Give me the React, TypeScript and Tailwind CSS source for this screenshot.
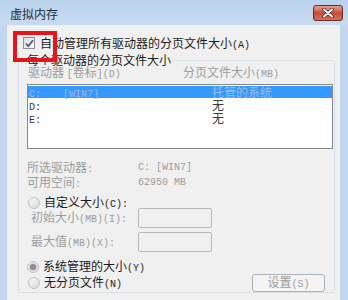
import type { ReactNode } from 'react';

function M({ children }: { children: ReactNode }) {
  return <span className="font-['Liberation_Mono',monospace] text-[10px] leading-none">{children}</span>;
}

function CloseButton() {
  return (
    <button className="mt-[5px] w-[30px] h-[16px] rounded-[3px] border border-[#6e2a22] bg-gradient-to-b from-[#e6a195] via-[#c9493a] to-[#d4705c] flex items-center justify-center">
      <svg width="12" height="10" viewBox="0 0 12 10">
        <path d="M2 1.5l8 7M10 1.5l-8 7" stroke="#5a2a24" strokeWidth="3.6" strokeLinecap="round" />
        <path d="M2 1.5l8 7M10 1.5l-8 7" stroke="#ffffff" strokeWidth="2" strokeLinecap="round" />
      </svg>
    </button>
  );
}

function Checkbox() {
  return (
    <span className="w-[12px] h-[12px] shrink-0 border border-[#8e8f8f] bg-gradient-to-br from-[#dcdcdc] to-[#fbfbfb] flex items-center justify-center">
      <svg width="9" height="9" viewBox="0 0 9 9">
        <path d="M1 4.5l2.3 2.6L8 1.2" fill="none" stroke="#4a5d80" strokeWidth="1.8" />
      </svg>
    </span>
  );
}

function Radio({ checked }: { checked?: boolean }) {
  return (
    <span className="w-[12px] h-[12px] shrink-0 rounded-full border border-[#c2c2c2] bg-gradient-to-br from-[#f8f8f8] to-[#dadada] flex items-center justify-center">
      {checked && <span className="w-[6px] h-[6px] rounded-full bg-[#8d8d8d] ring-1 ring-[#cfcfcf]" />}
    </span>
  );
}

function TextBox() {
  return <div className="w-[74px] h-[20px] border border-[#b8b8b8] rounded-[2px] bg-[#f0f0f0]" />;
}

export default function App() {
  return (
    <div className="relative w-[348px] h-[300px] overflow-hidden flex flex-col bg-[#c3d8ee] font-['Noto_Sans_CJK_SC',sans-serif] text-[12px] text-[#1c1c1c]">
      <div className="h-[25px] shrink-0 flex items-start justify-between pl-[10px] pr-[5px] bg-gradient-to-b from-[#bad2ec] to-[#c8dbf0]">
        <span className="mt-[6px] leading-[16px] text-[#1e2b3c]">虚拟内存</span>
        <CloseButton />
      </div>

      <div className="flex-1 flex pl-[7px] pr-[8px]">
        <div className="flex-1 bg-[#f0f0f0] pl-[11px] pr-[5px] flex flex-col">
          <div className="mt-[12px] h-[12px] shrink-0 flex items-center gap-[5px] pl-[5px]">
            <Checkbox />
            <span className="leading-[14px] whitespace-nowrap">
              自动管理所有驱动器的分页文件大小<M>(A)</M>
            </span>
          </div>

          <fieldset className="mt-[6px] min-w-0 border border-[#d5dfe5] rounded-[3px] pl-[8px] pr-[1px]">
            <legend className="h-[10px] flex items-center whitespace-nowrap">
              <span className="leading-[12px]">每个驱动器的分页文件大小</span>
            </legend>

            <div className="mt-[1px] h-[12px] flex items-center pl-[1px] text-[#9d9d9d] whitespace-nowrap">
              <span className="w-[155px]">
                驱动器 <M>[</M>卷标<M>](D)</M>
              </span>
              <span>
                分页文件大小<M>(MB)</M>
              </span>
            </div>

            <div className="mt-[6px] h-[65px] border border-[#828790] bg-white pt-[1px] whitespace-nowrap">
              <div className="h-[12px] flex items-center pl-[1px] bg-[#3399ff] text-[#9dbde2]">
                <span className="w-[34px]"><M>C:</M></span>
                <span className="w-[149px]"><M>[WIN7]</M></span>
                <span className="leading-[12px]">托管的系统</span>
              </div>
              <div className="h-[13px] flex items-center pl-[1px] text-[#3a3a3a]">
                <span className="w-[183px]"><M>D:</M></span>
                <span className="leading-[12px]">无</span>
              </div>
              <div className="h-[13px] flex items-center pl-[1px] text-[#3a3a3a]">
                <span className="w-[183px]"><M>E:</M></span>
                <span className="leading-[12px]">无</span>
              </div>
            </div>

            <div className="mt-[11px] flex flex-col text-[#9d9d9d] whitespace-nowrap">
              <div className="h-[15px] flex items-center">
                <span className="w-[111px] leading-[12px]">所选驱动器<M>:</M></span>
                <M>C:  [WIN7]</M>
              </div>
              <div className="h-[15px] flex items-center">
                <span className="w-[111px] leading-[12px]">可用空间<M>:</M></span>
                <M>62950 MB</M>
              </div>
            </div>

            <div className="mt-[7px] h-[11px] flex items-center gap-[4px] pl-[1px] whitespace-nowrap">
              <Radio />
              <span className="leading-[12px]">自定义大小<M>(C):</M></span>
            </div>

            <div className="h-[20px] flex items-center pl-[4px] text-[#9d9d9d] whitespace-nowrap">
              <span className="w-[107px] leading-[12px]">初始大小<M>(MB)(I):</M></span>
              <TextBox />
            </div>
            <div className="mt-[4px] h-[20px] flex items-center pl-[4px] text-[#9d9d9d] whitespace-nowrap">
              <span className="w-[107px] leading-[12px]">最大值<M>(MB)(X):</M></span>
              <TextBox />
            </div>

            <div className="mt-[8px] h-[14px] flex items-center gap-[4px] whitespace-nowrap">
              <Radio checked />
              <span className="leading-[12px]">系统管理的大小<M>(Y)</M></span>
            </div>

            <div className="h-[18px] flex items-center justify-between pr-[8px] whitespace-nowrap">
              <div className="flex items-center gap-[4px] pl-[1px]">
                <Radio />
                <span className="leading-[12px]">无分页文件<M>(N)</M></span>
              </div>
              <button className="w-[73px] h-[18px] rounded-[3px] border border-[#adb2b5] bg-[#f4f4f4] text-[#9d9d9d] leading-[12px]">
                设置<M>(S)</M>
              </button>
            </div>
          </fieldset>
        </div>
      </div>

      <div className="absolute left-[13px] top-[31px] w-[44px] h-[31px] border-4 border-[#e8141b]" />
    </div>
  );
}
